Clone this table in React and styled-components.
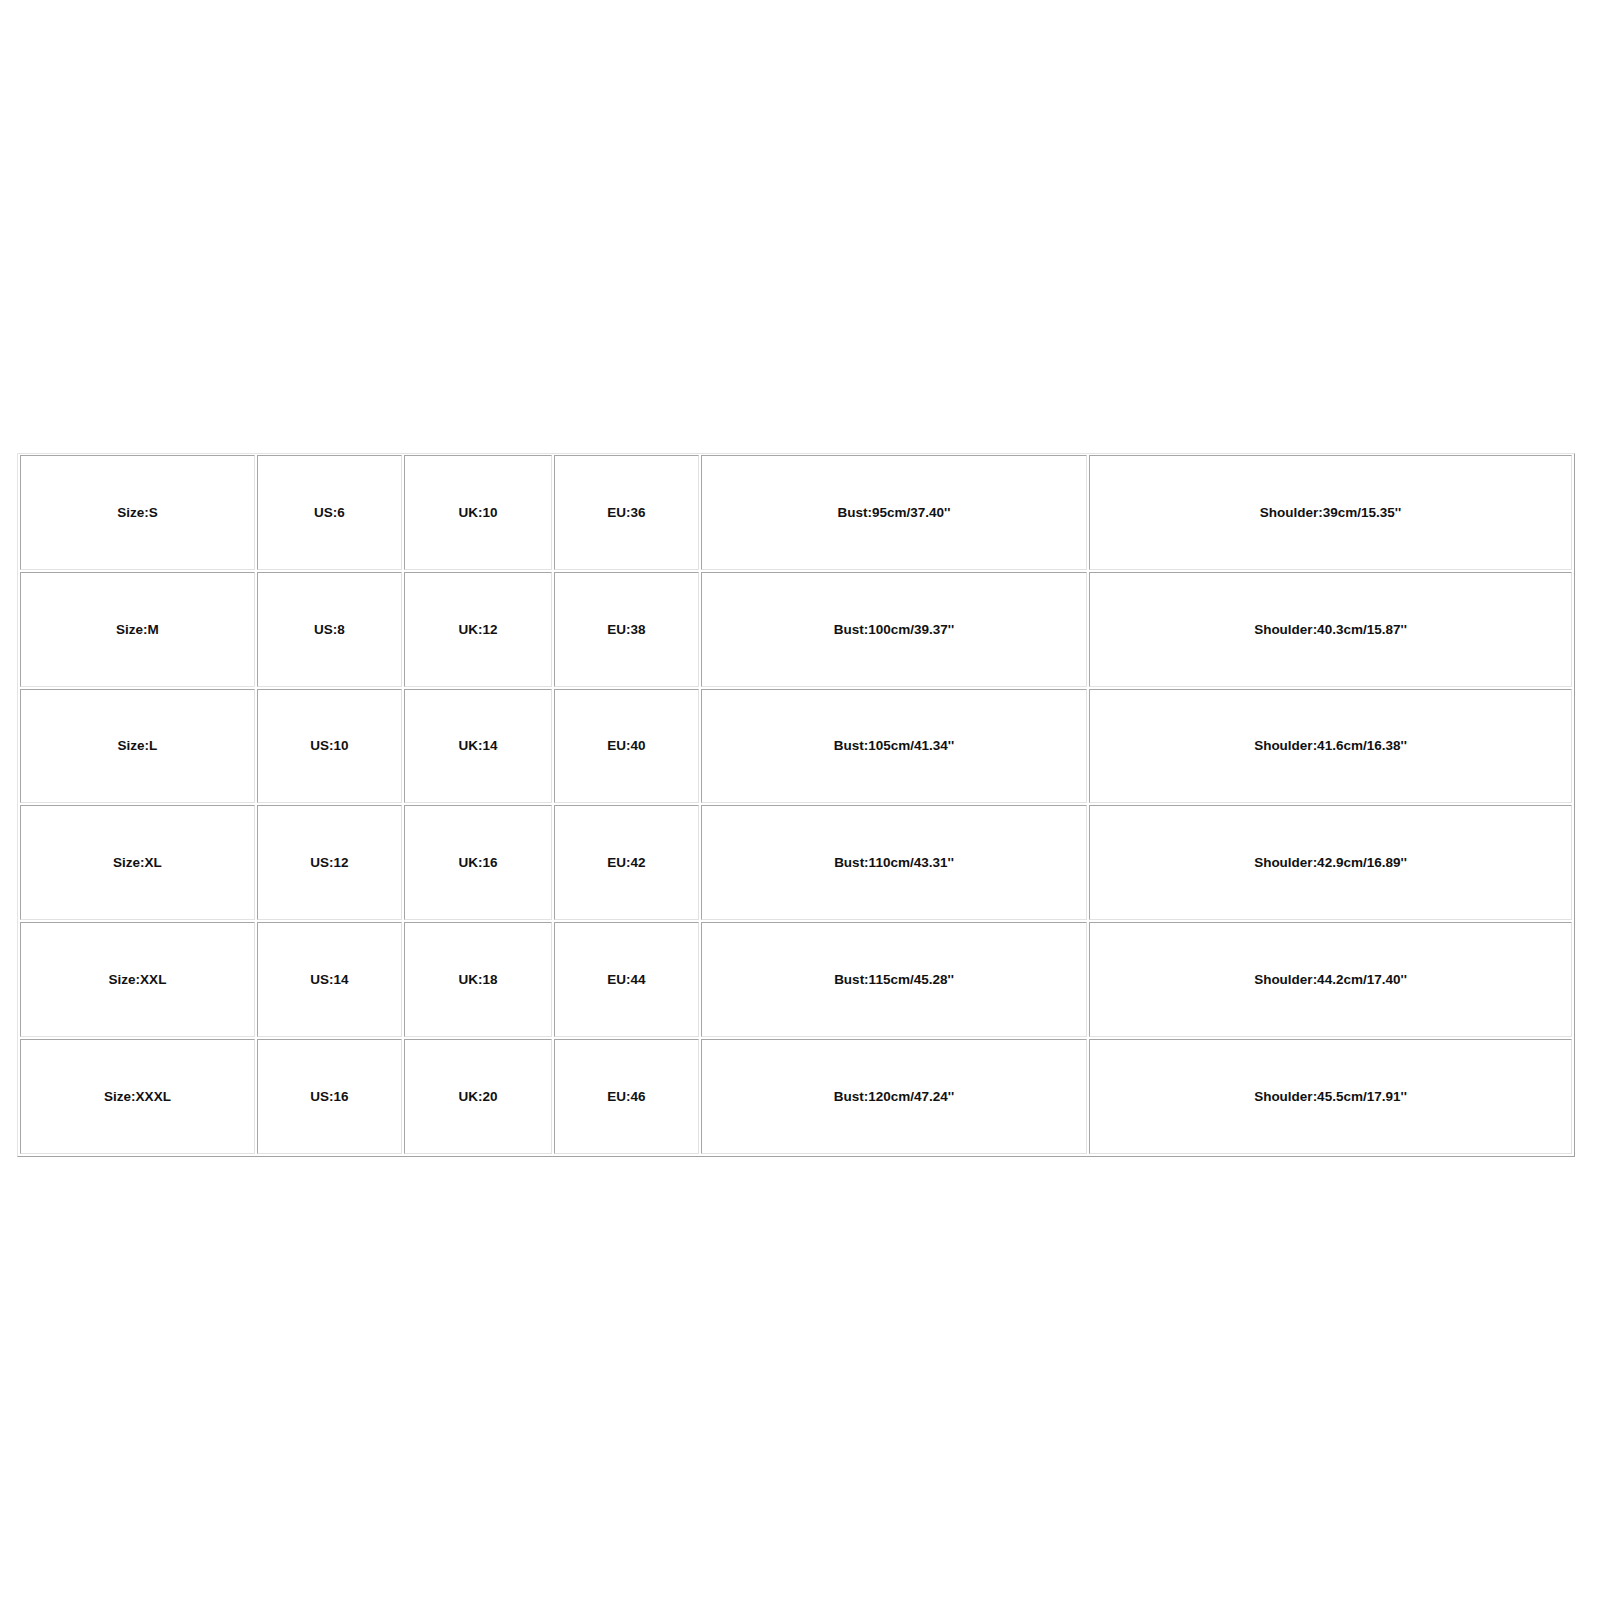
import React from "react";
import styled, { createGlobalStyle } from "styled-components";

const GlobalStyle = createGlobalStyle`
  html, body {
    margin: 0;
    padding: 0;
    background: #ffffff;
  }
  body {
    font-family: "Liberation Sans", Arial, sans-serif;
  }
`;

const Page = styled.div`
  min-height: 1600px;
  box-sizing: border-box;
  padding: 453px 0 0 17px;
  background: #ffffff;
`;

const Chart = styled.div`
  display: grid;
  width: fit-content;
  grid-template-columns: 235px 145px 148px 145px 386px 483px;
  grid-auto-rows: 114.75px;
  gap: 2px;
  padding: 1px 2px 2px 2px;
  border: 1px solid;
  border-color: #e4e4e4 #a2a2a2 #a2a2a2 #e4e4e4;
  background: #ffffff;
`;

const Cell = styled.div`
  box-sizing: border-box;
  display: flex;
  align-items: center;
  justify-content: center;
  border: 1px solid;
  border-color: #a6a6a6 #e2e2e2 #e2e2e2 #a6a6a6;
  font-family: "Liberation Sans", Arial, sans-serif;
  font-weight: 700;
  font-size: 13.5px;
  color: #111111;
  white-space: nowrap;
`;

const rows = [
  ["Size:S", "US:6", "UK:10", "EU:36", "Bust:95cm/37.40''", "Shoulder:39cm/15.35''"],
  ["Size:M", "US:8", "UK:12", "EU:38", "Bust:100cm/39.37''", "Shoulder:40.3cm/15.87''"],
  ["Size:L", "US:10", "UK:14", "EU:40", "Bust:105cm/41.34''", "Shoulder:41.6cm/16.38''"],
  ["Size:XL", "US:12", "UK:16", "EU:42", "Bust:110cm/43.31''", "Shoulder:42.9cm/16.89''"],
  ["Size:XXL", "US:14", "UK:18", "EU:44", "Bust:115cm/45.28''", "Shoulder:44.2cm/17.40''"],
  ["Size:XXXL", "US:16", "UK:20", "EU:46", "Bust:120cm/47.24''", "Shoulder:45.5cm/17.91''"],
];

export default function App() {
  return (
    <>
      <GlobalStyle />
      <Page>
        <Chart>
          {rows.map((row, r) =>
            row.map((text, c) => <Cell key={`${r}-${c}`}>{text}</Cell>)
          )}
        </Chart>
      </Page>
    </>
  );
}
